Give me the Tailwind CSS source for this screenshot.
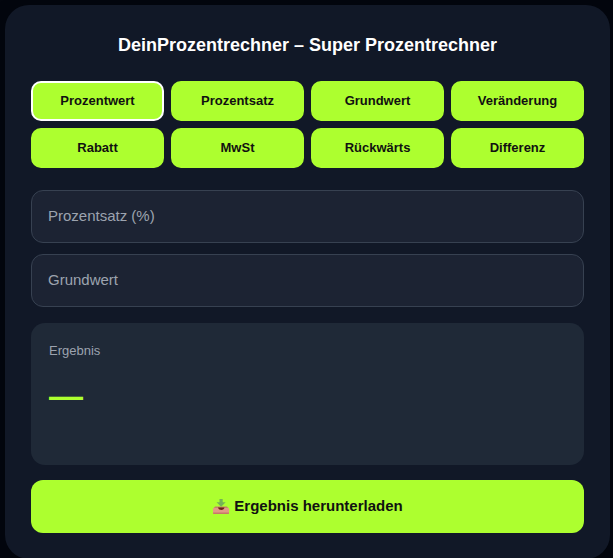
<!DOCTYPE html>
<html lang="de">
<head>
  <meta charset="UTF-8">
  <meta name="viewport" content="width=device-width, initial-scale=1.0">
  <title>DeinProzentrechner</title>
  <script src="https://cdn.jsdelivr.net/npm/@tailwindcss/browser@4"></script>
</head>
<body class="bg-[#03060e] min-h-screen overflow-x-hidden pt-[5px] pl-[5px] pr-[3px] font-['Liberation_Sans',Arial,sans-serif]">

  <main class="bg-[#111827] rounded-3xl shadow-2xl p-[26px]">
    <h1 class="text-lg leading-7 font-bold text-white text-center mb-[22px]">DeinProzentrechner – Super Prozentrechner</h1>

    <!-- Modes -->
    <div id="modes" class="grid grid-cols-4 gap-[7px] mb-[22px]">
      <button type="button" class="h-10 rounded-[10px] bg-[#adff2f] border-2 border-white text-[13px] font-bold text-[#111111]">Prozentwert</button>
      <button type="button" class="h-10 rounded-[10px] bg-[#adff2f] border-2 border-[#adff2f] text-[13px] font-bold text-[#111111]">Prozentsatz</button>
      <button type="button" class="h-10 rounded-[10px] bg-[#adff2f] border-2 border-[#adff2f] text-[13px] font-bold text-[#111111]">Grundwert</button>
      <button type="button" class="h-10 rounded-[10px] bg-[#adff2f] border-2 border-[#adff2f] text-[13px] font-bold text-[#111111]">Veränderung</button>
      <button type="button" class="h-10 rounded-[10px] bg-[#adff2f] border-2 border-[#adff2f] text-[13px] font-bold text-[#111111]">Rabatt</button>
      <button type="button" class="h-10 rounded-[10px] bg-[#adff2f] border-2 border-[#adff2f] text-[13px] font-bold text-[#111111]">MwSt</button>
      <button type="button" class="h-10 rounded-[10px] bg-[#adff2f] border-2 border-[#adff2f] text-[13px] font-bold text-[#111111]">Rückwärts</button>
      <button type="button" class="h-10 rounded-[10px] bg-[#adff2f] border-2 border-[#adff2f] text-[13px] font-bold text-[#111111]">Differenz</button>
    </div>

    <form id="calcForm" class="flex flex-col gap-[11px] mb-4">
      <input type="number" id="percent" aria-label="Prozentsatz (%)" placeholder="Prozentsatz (%)" class="w-full h-[53px] px-4 pb-[2px] rounded-xl bg-[#1c2333] border border-[#374151] text-[15px] text-white placeholder:text-[#9ca3af] focus:outline-none focus:border-[#adff2f]">
      <input type="number" id="base" aria-label="Grundwert" placeholder="Grundwert" class="w-full h-[53px] px-4 pb-[2px] rounded-xl bg-[#1c2333] border border-[#374151] text-[15px] text-white placeholder:text-[#9ca3af] focus:outline-none focus:border-[#adff2f]">
    </form>

    <!-- Result -->
    <section class="min-h-[142px] rounded-[14px] bg-[#1f2937] p-[18px] mb-[15px]">
      <h2 class="text-[13px] leading-5 text-[#9ca3af] mb-[14px]">Ergebnis</h2>
      <output id="result" class="block text-[34px] leading-10 font-bold text-[#adff2f]">—</output>
    </section>

    <button type="button" id="download" class="w-full h-[53px] flex items-center justify-center gap-1 rounded-xl bg-[#adff2f] text-[15px] font-bold text-[#111111]">
      <svg class="w-[18px] h-[18px]" viewBox="0 0 18 18" aria-hidden="true">
        <path d="M3 8.500h12l2 2.500H1z" fill="#c4826a"/>
        <path d="M1 10h16v5.200a.8.8 0 0 1-.8.8H1.800a.8.8 0 0 1-.8-.8z" fill="#e39a86"/>
        <path d="M1 14.500h16v.7a.8.8 0 0 1-.8.8H1.800a.8.8 0 0 1-.8-.8z" fill="#c77a68"/>
        <path d="M6 9.500h6.500c-.3 1.500-1.500 2.500-3.200 2.500S6.300 11 6 9.500z" fill="#6b1f17"/>
        <path d="M7.500 1h3.200v3.200h3L9.100 8.800 4.500 4.200h3z" fill="#74b455"/>
      </svg>
      <span>Ergebnis herunterladen</span>
    </button>
  </main>

</body>
</html>
